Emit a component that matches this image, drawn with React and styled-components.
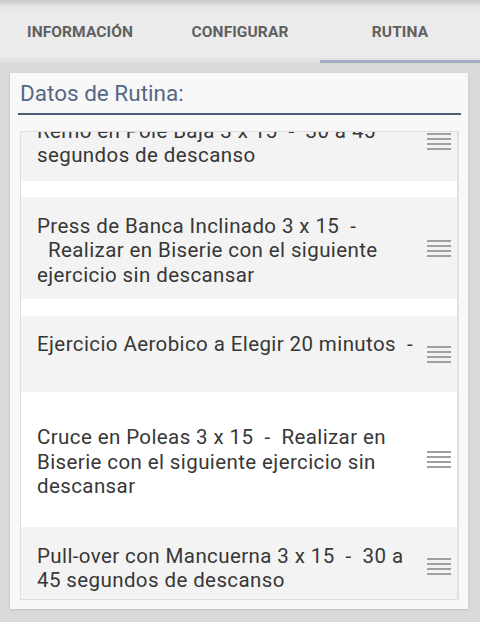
import React from "react";
import styled, { createGlobalStyle } from "styled-components";

const Global = createGlobalStyle`
  html, body { margin: 0; padding: 0; background: #d9d9d9; }
  body { font-family: Roboto, "Noto Sans", sans-serif; }
  * { box-sizing: border-box; }
`;

const Page = styled.div`
  width: 480px;
  height: 622px;
  background: #d9d9d9;
  display: flex;
  flex-direction: column;
  overflow: hidden;
`;

const TabBar = styled.div`
  flex: none;
  display: grid;
  grid-template-columns: repeat(3, 1fr);
  height: 63px;
  background: linear-gradient(#c9c9c9 0px, #e4e4e4 6px, #ebebeb 12px, #ebebeb 56px, #e2e2e2 60px);
`;

const Tab = styled.div`
  display: flex;
  align-items: center;
  justify-content: center;
  padding-top: 3px;
  font-size: 15.5px;
  font-weight: 700;
  color: #606060;
  letter-spacing: 0.1px;
  border-bottom: 3px solid ${(p) => (p.$active ? "#a1adc0" : "transparent")};
`;

const Content = styled.div`
  flex: 1;
  min-height: 0;
  padding: 10px 12px 13px 10px;
  display: flex;
`;

const Card = styled.div`
  flex: 1;
  min-height: 0;
  background: #f8f8f8;
  box-shadow: 0 1px 2px rgba(0, 0, 0, 0.12);
  padding: 6px 7px 9px 8px;
  display: flex;
  flex-direction: column;
`;

const Title = styled.div`
  flex: none;
  font-size: 22.5px;
  color: #566784;
  padding: 0 0 6px 2px;
  line-height: 28px;
  border-bottom: 2.5px solid #4f5c78;
`;

const List = styled.div`
  margin: 16px 2px 0 2px;
  flex: 1;
  min-height: 0;
  background: #ffffff;
  border: 1px solid #dddddd;
  border-right: 2px solid #e1e1e1;
  overflow: hidden;
`;

const Row = styled.div`
  display: flex;
  align-items: center;
  background: ${(p) => (p.$tone === "white" ? "#ffffff" : "#f3f3f3")};
  padding: ${(p) => p.$top}px 6px ${(p) => p.$bottom}px 16px;
  margin-top: ${(p) => p.$gap}px;
`;

const Text = styled.div`
  flex: 1;
  white-space: pre;
  padding-top: 5px;
  font-size: 20.5px;
  letter-spacing: 0.4px;
  line-height: 24.5px;
  color: #373737;
`;

const Handle = styled.svg`
  flex: none;
  width: 24px;
  height: 17px;
  margin-top: 1px;
`;

const HandleIcon = () => (
  <Handle viewBox="0 0 24 17">
    {[1, 6, 11, 16].map((y) => (
      <rect key={y} x="0" y={y - 1} width="24" height="2" fill="#a0a0a0" />
    ))}
  </Handle>
);

const items = [
  { text: "Remo en Pole Baja 3 x 15  -  30 a 45\nsegundos de descanso", tone: "grey", top: 11.5, bottom: 13.5, gap: -30 },
  { text: "Press de Banca Inclinado 3 x 15  -\n  Realizar en Biserie con el siguiente\nejercicio sin descansar", tone: "grey", top: 11.5, bottom: 11.5, gap: 16 },
  { text: "Ejercicio Aerobico a Elegir 20 minutos  -\n ", tone: "grey", top: 11, bottom: 11, gap: 17 },
  { text: "Cruce en Poleas 3 x 15  -  Realizar en\nBiserie con el siguiente ejercicio sin\ndescansar", tone: "white", top: 28.5, bottom: 28.5, gap: 0 },
  { text: "Pull-over con Mancuerna 3 x 15  -  30 a\n45 segundos de descanso", tone: "grey", top: 11.5, bottom: 11.5, gap: 0 },
];

export default function App() {
  return (
    <>
      <Global />
      <Page>
        <TabBar>
          <Tab>INFORMACIÓN</Tab>
          <Tab>CONFIGURAR</Tab>
          <Tab $active>RUTINA</Tab>
        </TabBar>
        <Content>
          <Card>
            <Title>Datos de Rutina:</Title>
            <List>
              {items.map((it, i) => (
                <Row key={i} $tone={it.tone} $top={it.top} $bottom={it.bottom} $gap={it.gap}>
                  <Text>{it.text}</Text>
                  <HandleIcon />
                </Row>
              ))}
            </List>
          </Card>
        </Content>
      </Page>
    </>
  );
}
